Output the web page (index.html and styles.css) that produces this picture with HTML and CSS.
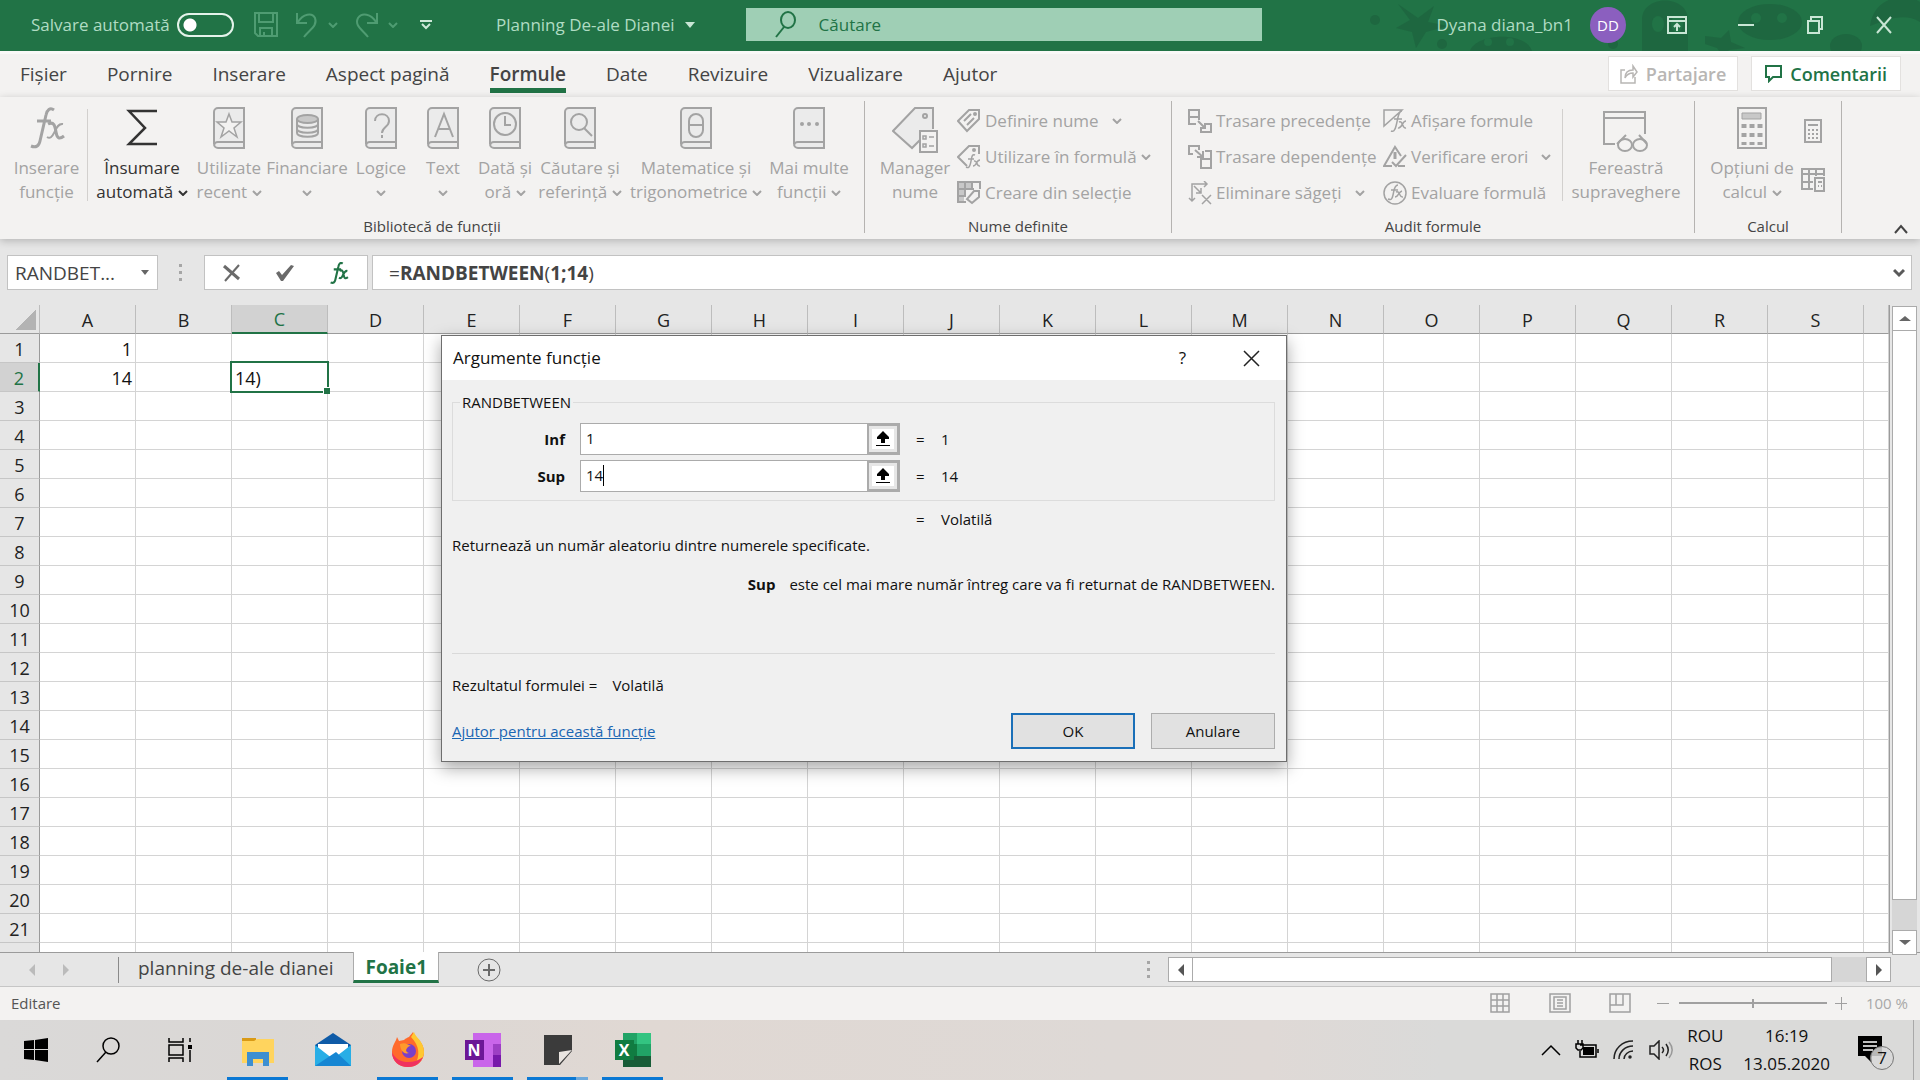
FILE: index.html
```html
<!DOCTYPE html>
<html lang="ro">
<head>
<meta charset="utf-8">
<title>Planning De-ale Dianei - Excel</title>
<link rel="stylesheet" href="styles.css">
</head>
<body>
<svg class="defs" aria-hidden="true">
  <symbol id="chev" viewBox="0 0 10 6"><path d="M1 1l4 4 4-4" fill="none" stroke="currentColor" stroke-width="2"/></symbol>
  <symbol id="book" viewBox="0 0 32 42"><path d="M31 1H5a4 4 0 0 0-4 4v32a4 4 0 0 0 4 4h26zM31 35H5a4 4 0 0 0-4 3" fill="#ebebeb" stroke="currentColor" stroke-width="2"/></symbol>
</svg>

<header class="titlebar">
  <svg class="decor" viewBox="0 0 640 51" preserveAspectRatio="xMaxYMin slice" aria-hidden="true">
    <g fill="#1c5c3b" opacity=".5">
      <path d="M118 4l20 14 16-12-6 16 20 4-22 6-10 16-4-16-16-4 14-8zM425 36l16 2 8-8 2 12 14 6-16 2-6 6-6-8-12-4z"/>
      <path d="M190 51c6-18 56-20 62 0zM362 51V20c0-26 46-26 46 0v31z"/>
      <ellipse cx="490" cy="22" rx="32" ry="18"/><ellipse cx="566" cy="46" rx="16" ry="12"/>
      <path d="M590 26c4-30 36-34 50-24v20c-16-10-34-2-50 4z"/>
      <circle cx="95" cy="20" r="5"/><circle cx="162" cy="44" r="5"/><circle cx="333" cy="44" r="5"/>
    </g>
    <g fill="#217346"><ellipse cx="378" cy="24" rx="6" ry="8"/><ellipse cx="397" cy="24" rx="6" ry="8"/><circle cx="476" cy="18" r="5"/><circle cx="502" cy="18" r="5"/><circle cx="208" cy="42" r="4"/><circle cx="230" cy="42" r="4"/></g>
  </svg>
  <label class="autosave">Salvare automată <input type="checkbox" role="switch"></label>
  <div class="quick">
    <button aria-label="Salvare"><svg width="24" height="25" viewBox="0 0 24 25" fill="none" stroke="currentColor" stroke-width="2"><path d="M1 1h22v23H4l-3-3zM5 1v9h14V1M6 24v-8h12v8M10 24v-4"/></svg></button>
    <button class="undo" aria-label="Anulare tastare"><svg width="24" height="26" viewBox="0 0 24 26" fill="none" stroke="currentColor" stroke-width="2"><path d="M2 1v10h10M3 10C8 2 17 0 20 6c3 8-6 12-11 19"/></svg><svg class="chev"><use href="#chev"/></svg></button>
    <button class="undo" aria-label="Refacere"><svg width="24" height="26" viewBox="0 0 24 26" fill="none" stroke="currentColor" stroke-width="2"><path d="M22 1v10H12M21 10C16 2 7 0 3 6c-4 8 5 12 10 19"/></svg><svg class="chev"><use href="#chev"/></svg></button>
    <button class="more" aria-label="Particularizare"><svg width="12" height="10" viewBox="0 0 12 10" fill="none" stroke="currentColor" stroke-width="2"><path d="M0 1h12M2 4l4 4 4-4"/></svg></button>
  </div>
  <button class="doc">Planning De-ale Dianei <i class="tri light"></i></button>
  <label class="search"><svg width="22" height="28" viewBox="0 0 22 28" fill="none" stroke="currentColor" stroke-width="2"><ellipse cx="13" cy="9" rx="7" ry="8"/><path d="M9 16L1 26"/></svg><input type="search" placeholder="Căutare" aria-label="Căutare"></label>
  <span class="user">Dyana diana_bn1</span>
  <span class="avatar">DD</span>
  <div class="winctl">
    <button aria-label="Opțiuni panglică"><svg width="20" height="18" viewBox="0 0 20 18" fill="none" stroke="currentColor" stroke-width="2"><path d="M1 1h18v16H1zM1 5h18M10 15V8M7 11l3-3 3 3"/></svg></button>
    <button aria-label="Minimizare"><svg width="16" height="18" viewBox="0 0 16 18" stroke="currentColor" stroke-width="2"><path d="M0 9h16"/></svg></button>
    <button aria-label="Restaurare"><svg width="16" height="18" viewBox="0 0 16 18" fill="none" stroke="currentColor" stroke-width="2"><path d="M1 5h11v12H1zM4 5V1h11v12h-3"/></svg></button>
    <button aria-label="Închidere"><svg width="16" height="18" viewBox="0 0 16 18" stroke="currentColor" stroke-width="2"><path d="M1 1l14 16M15 1L1 17"/></svg></button>
  </div>
</header>

<nav class="tabs">
  <a href="#">Fișier</a><a href="#">Pornire</a><a href="#">Inserare</a><a href="#">Aspect pagină</a><a href="#" class="on">Formule</a><a href="#">Date</a><a href="#">Revizuire</a><a href="#">Vizualizare</a><a href="#">Ajutor</a>
  <div class="share">
    <button disabled><svg width="18" height="20" viewBox="0 0 18 20" fill="none" stroke="currentColor" stroke-width="1.5"><path d="M5 6H1v13h14v-6M5 14c0-6 4-8 8-8V2l4 6-4 5V9c-4 0-6 1-8 5z"/></svg>Partajare</button>
    <button class="com"><svg width="17" height="18" viewBox="0 0 17 18" fill="none" stroke="currentColor" stroke-width="2"><path d="M1 1h15v11H8l-4 4v-4H1z"/></svg>Comentarii</button>
  </div>
</nav>

<section class="ribbon">
  <div class="group">
    <div class="tools">
      <button class="big b-ins"><svg width="38" height="42" viewBox="0 0 38 42" fill="none" stroke="currentColor"><path stroke-width="3" d="M26 3c-4-3-7 0-8 5l-6 26c-1 5-4 7-9 5M9 14h14"/><path stroke-width="3" d="M20 17c6-3 7 2 8 8s3 8 8 4"/><path stroke-width="2" d="M35 17c-5-1-7 5-9 9s-4 6-7 4"/></svg><span>Inserare<br>funcție</span></button>
      <hr>
      <button class="big b-sum dark"><svg width="32" height="42" viewBox="0 0 32 42" fill="none" stroke="currentColor" stroke-width="2.500"><path d="M31 4H3l16 17L3 37h28"/></svg><span>Însumare<br>automată <svg class="chev"><use href="#chev"/></svg></span></button>
      <button class="big b-rec"><svg width="32" height="42" viewBox="0 0 32 42"><use href="#book"/><path d="M16 7l3 8h9l-7 6 3 9-8-6-8 6 3-9-7-6h9z" fill="#f3f2f1" stroke="currentColor" stroke-width="1.5"/></svg><span>Utilizate<br>recent <svg class="chev"><use href="#chev"/></svg></span></button>
      <button class="big b-fin"><svg width="32" height="42" viewBox="0 0 32 42"><use href="#book"/><path d="M6 12v14c0 5 21 5 21 0V12M6 17c0 5 21 5 21 0M6 22c0 5 21 5 21 0" fill="none" stroke="currentColor" stroke-width="2"/><ellipse cx="16.500" cy="12" rx="10.500" ry="4" fill="#c8c8c8" stroke="currentColor" stroke-width="2"/></svg><span>Financiare<br><svg class="chev"><use href="#chev"/></svg></span></button>
      <button class="big b-log"><svg width="32" height="42" viewBox="0 0 32 42"><use href="#book"/><path d="M10 14c0-9 14-9 14 0 0 6-7 6-7 12M17 28v3" fill="none" stroke="currentColor" stroke-width="2"/></svg><span>Logice<br><svg class="chev"><use href="#chev"/></svg></span></button>
      <button class="big b-txt"><svg width="32" height="42" viewBox="0 0 32 42"><use href="#book"/><path d="M8 30l9-23 9 23M11 22h12" fill="none" stroke="currentColor" stroke-width="2"/></svg><span>Text<br><svg class="chev"><use href="#chev"/></svg></span></button>
      <button class="big b-log"><svg width="32" height="42" viewBox="0 0 32 42"><use href="#book"/><g fill="none" stroke="currentColor" stroke-width="2"><circle cx="16" cy="17" r="11"/><path d="M16 9v9h6"/></g></svg><span>Dată și<br>oră <svg class="chev"><use href="#chev"/></svg></span></button>
      <button class="big b-cau"><svg width="32" height="42" viewBox="0 0 32 42"><use href="#book"/><g fill="none" stroke="currentColor" stroke-width="2"><circle cx="15" cy="15" r="8"/><path d="M20 21l8 8"/></g></svg><span>Căutare și<br>referință <svg class="chev"><use href="#chev"/></svg></span></button>
      <button class="big b-mat"><svg width="32" height="42" viewBox="0 0 32 42"><use href="#book"/><g fill="none" stroke="currentColor" stroke-width="2"><rect x="9" y="7" width="14" height="23" rx="7"/><path d="M9 18h14"/></g></svg><span>Matematice și<br>trigonometrice <svg class="chev"><use href="#chev"/></svg></span></button>
      <button class="big b-rec"><svg width="32" height="42" viewBox="0 0 32 42"><use href="#book"/><g fill="currentColor"><circle cx="9" cy="17" r="2"/><circle cx="16" cy="17" r="2"/><circle cx="24" cy="17" r="2"/></g></svg><span>Mai multe<br>funcții <svg class="chev"><use href="#chev"/></svg></span></button>
    </div>
    <h2>Bibliotecă de funcții</h2>
  </div>

  <div class="group g-names">
    <div class="tools">
      <button class="big b-rec"><svg width="46" height="46" viewBox="0 0 46 46" fill="#ebebeb" stroke="currentColor" stroke-width="2"><path d="M41 22V1H23L1 24l19 17 8-8"/><circle cx="33" cy="9" r="2" fill="none"/><path d="M28 24h17v21H28z" fill="#f3f2f1"/><path d="M31 29h3v3h-3zM31 37h3v3h-3zM37 30h5M37 39h5" stroke-width="1.500"/></svg><span>Manager<br>nume</span></button>
      <div class="stack">
        <button><svg width="24" height="24" viewBox="0 0 24 24" fill="none" stroke="currentColor" stroke-width="2"><path d="M22 1v9L10 22 1 12 12 1zM7 12l7-7M10 16l7-7" /><circle cx="18" cy="5" r="1"/></svg>Definire nume <svg class="chev far"><use href="#chev"/></svg></button>
        <button><svg width="24" height="24" viewBox="0 0 24 24" fill="none" stroke="currentColor" stroke-width="2"><path d="M22 9V1H12L1 12l9 9"/><circle cx="17" cy="5" r="1"/><path stroke-width="1.500" d="M18 10c-4-2-3 5-5 10-1 3-2 3-4 2M11 14h6M17 16c4-1 2 6 6 5M23 15c-4 0-3 6-7 6"/></svg>Utilizare în formulă <svg class="chev"><use href="#chev"/></svg></button>
        <button><svg width="24" height="24" viewBox="0 0 24 24" fill="none" stroke="currentColor" stroke-width="2"><path d="M1 1h15v6H7v14H1z" fill="#c8c8c8" stroke="none"/><path d="M9 21H1V1h22v7M1 8h16M8 1v14M15 1v7M1 15h8M22 10v6l-7 6-5-4 7-8z"/></svg>Creare din selecție</button>
      </div>
    </div>
    <h2>Nume definite</h2>
  </div>

  <div class="group g-audit">
    <div class="tools">
      <div class="stack s-trace">
        <button><svg width="24" height="24" viewBox="0 0 24 24" fill="none" stroke="currentColor" stroke-width="2"><path d="M1 1h10v7H1zM8 15H1V8h10v3M18 15h5v8H13v-4M10 12l7 7M17 14v5h-5"/></svg>Trasare precedențe</button>
        <button><svg width="24" height="24" viewBox="0 0 24 24" fill="none" stroke="currentColor" stroke-width="2"><path d="M5 9H1V1h10v4M17 6h6v8H13v-3M13 14h10v9H13zM7 5l8 7M15 6v6h-6"/></svg>Trasare dependențe</button>
        <button><svg width="24" height="24" viewBox="0 0 24 24" fill="none" stroke="currentColor" stroke-width="1.500"><path d="M4 20V3h15M16 0l3 3-3 3M1 17l3 3 3-3M6 5l7 7M13 7v5H8M14 14l9 9M23 14l-9 9"/></svg>Eliminare săgeți <svg class="chev far"><use href="#chev"/></svg></button>
      </div>
      <div class="stack s-check">
        <button><svg width="24" height="24" viewBox="0 0 24 24" fill="none" stroke="currentColor" stroke-width="1.500"><path d="M1 17V1h18zM19 2c-4 0-4 8-6 15-1 5-3 6-5 5M11 10h8M16 13c4-2 3 7 7 6M23 12c-4 0-4 8-8 7"/></svg>Afișare formule</button>
        <button><svg width="24" height="24" viewBox="0 0 24 24" fill="none" stroke="currentColor" stroke-width="2"><path d="M18 11L12 2 1 21h8M9 17l4 4L23 10M15 21h7"/><path d="M12 7v7" stroke-width="3"/></svg>Verificare erori <svg class="chev far"><use href="#chev"/></svg></button>
        <button><svg width="24" height="24" viewBox="0 0 24 24" fill="none" stroke="currentColor" stroke-width="1.500"><circle cx="12" cy="12" r="11"/><path d="M15 4c-4 0-4 6-5 10-1 5-2 5-5 4M8 9h7M13 11c4-2 3 6 7 5M19 10c-4 1-3 6-7 6"/></svg>Evaluare formulă</button>
      </div>
      <hr>
      <button class="big b-win"><svg width="46" height="46" viewBox="0 0 46 46" fill="none" stroke="currentColor" stroke-width="2"><path d="M12 37H1V5h41v22M1 11h41"/><ellipse cx="22" cy="38" rx="7" ry="6"/><ellipse cx="37" cy="38" rx="7" ry="6"/><path d="M14 37l9-9M44 37l-8-9"/></svg><span>Fereastră<br>supraveghere</span></button>
    </div>
    <h2>Audit formule</h2>
  </div>

  <div class="group g-calc">
    <div class="tools">
      <button class="big b-opt"><svg width="30" height="42" viewBox="0 0 30 42"><path d="M1 1h28v40H1z" fill="none" stroke="currentColor" stroke-width="2"/><path d="M5 6h19v6H5z" fill="#c8c8c8" stroke="currentColor"/><path d="M7 17v21M15 17v21M23 17v21" stroke="currentColor" stroke-width="5" stroke-dasharray="4 5"/></svg><span>Opțiuni de<br>calcul <svg class="chev"><use href="#chev"/></svg></span></button>
      <div class="mini">
        <button aria-label="Calcul acum"><svg width="24" height="24" viewBox="0 0 24 24"><path d="M4 1h16v22H4zM7 6h10" fill="none" stroke="currentColor" stroke-width="2"/><path d="M8 10v11M12 10v11M16 10v11" stroke="currentColor" stroke-width="2" stroke-dasharray="2 2"/></svg></button>
        <button aria-label="Calcul foaie"><svg width="24" height="24" viewBox="0 0 24 24" fill="none" stroke="currentColor" stroke-width="2"><path d="M12 21H1V1h22v7M1 6h22M1 14h11M8 1v20M15 1v7"/><path d="M14 10h9v13h-9z"/><path d="M17 14h4M17 18h1M20 18h1"/></svg></button>
      </div>
    </div>
    <h2>Calcul</h2>
  </div>
  <button class="fold" aria-label="Restrângere panglică"><svg width="14" height="10" viewBox="0 0 14 10" fill="none" stroke="currentColor" stroke-width="2"><path d="M1 9l6-7 6 7"/></svg></button>
</section>

<section class="fbar">
  <label class="namebox"><input value="RANDBET..." aria-label="Casetă nume"><i class="tri"></i></label>
  <i class="grip"></i>
  <div class="fbtns">
    <button aria-label="Anulare"><svg width="18" height="18" viewBox="0 0 18 18" fill="none" stroke="#6a6a6a"><path stroke-width="3" d="M1 2l15 13"/><path stroke-width="2" d="M16 1L2 17"/></svg></button>
    <button aria-label="Introducere"><svg width="20" height="18" viewBox="0 0 20 18" fill="#6a6a6a"><path d="M1 9l3-2 3 4L16 1l3 1L8 17H6z"/></svg></button>
    <button aria-label="Inserare funcție"><svg width="20" height="22" viewBox="0 0 38 42" fill="none" stroke="#217346"><path stroke-width="4" d="M26 3c-4-3-7 0-8 5l-6 26c-1 5-4 7-9 5M9 14h14"/><path stroke-width="4" d="M20 17c6-3 7 2 8 8s3 8 8 4M35 17c-5-1-7 5-9 9s-4 6-7 4"/></svg></button>
  </div>
  <div class="formula"><span>=<b>RANDBETWEEN</b>(<b>1;14</b>)</span><svg width="12" height="10" viewBox="0 0 12 10" fill="none" stroke="#5a5a5a" stroke-width="3"><path d="M1 2l5 5 5-5"/></svg></div>
</section>

<main class="work">
  <div class="grid"><table id="cells"></table></div>
  <div class="vscroll"><button aria-label="Sus"><i class="tri up"></i></button><div class="vtrack"><div class="vthumb"></div></div><button aria-label="Jos"><i class="tri"></i></button></div>
</main>

<section class="sheets">
  <i class="tri left pale"></i><i class="tri right pale"></i>
  <i class="bar"></i>
  <a href="#" class="sheet">planning de-ale dianei</a>
  <a href="#" class="sheet on">Foaie1</a>
  <button class="add" aria-label="Foaie nouă"><svg width="24" height="24" viewBox="0 0 24 24" fill="none" stroke="#6a6a6a"><circle cx="12" cy="12" r="11"/><path stroke-width="2" d="M12 6v12M6 12h12"/></svg></button>
  <i class="grip"></i>
  <div class="hscroll"><button aria-label="Stânga"><i class="tri left"></i></button><div class="htrack"><div class="hthumb"></div></div><button aria-label="Dreapta"><i class="tri right"></i></button></div>
</section>

<footer class="status">
  <span>Editare</span>
  <div class="views">
    <button aria-label="Normal"><svg width="22" height="20" viewBox="0 0 22 20" fill="none" stroke="currentColor" stroke-width="1.500"><path d="M2 1h18v18H2zM8 1v18M14 1v18M2 7h18M2 13h18"/></svg></button>
    <button aria-label="Aspect pagină"><svg width="22" height="20" viewBox="0 0 22 20" fill="none" stroke="currentColor" stroke-width="1.500"><path d="M1 1h20v18H1zM5 4h12v12H5zM8 7h6M8 10h6M8 13h6"/></svg></button>
    <button aria-label="Sfârșit de pagină"><svg width="22" height="20" viewBox="0 0 22 20" fill="none" stroke="currentColor" stroke-width="1.500"><path d="M1 1h20v18H1zM7 1v11M14 1v11H1"/></svg></button>
  </div>
  <div class="zoomer"><svg width="190" height="14" viewBox="0 0 190 14" stroke="currentColor" stroke-width="2"><path stroke-width="1" d="M0 7.500h12M178 7.500h12M184.500 1v13"/><path d="M22 7h148M96 3v9"/></svg></div>
  <span class="pct">100 %</span>
</footer>

<footer class="taskbar">
  <button class="t-sys" aria-label="Start"><svg width="24" height="24" viewBox="0 0 24 24"><path d="M0 3l10-1v9H0zM11 2l13-2v11H11zM0 12h10v10L0 21zM11 12h13v12l-13-2z"/></svg></button>
  <button class="t-sys" aria-label="Căutare"><svg width="24" height="26" viewBox="0 0 24 26" fill="none" stroke="#000" stroke-width="1.500"><circle cx="15" cy="9" r="8"/><path d="M10 15L1 25"/></svg></button>
  <button class="t-sys" aria-label="Vizualizare activități"><svg width="24" height="24" viewBox="0 0 24 24" fill="none" stroke="#000" stroke-width="1.500"><path d="M1 0v4h14V0M1 7h14v10H1zM1 24v-4h14v4M22 0v4M22 12v12"/><path d="M20 7h4v4h-4z" fill="#000" stroke="none"/></svg></button>
  <button class="t-app run" aria-label="Explorer"><svg width="34" height="34" viewBox="0 0 34 34"><path d="M1 5h14v6H1z" fill="#d99a16"/><path d="M1 8h12l3-2h17v24H1z" fill="#ffd45e"/><path d="M6 33V19h22v14h-6v-7H12v7z" fill="#3d8fd1"/></svg></button>
  <button class="t-app" aria-label="E-mail"><svg width="36" height="34" viewBox="0 0 36 34"><path d="M0 12L18 0l18 12v4H0z" fill="#0f5ba7"/><path d="M3 11h30v14H3z" fill="#fff"/><path d="M0 12l18 14L36 12v21H0z" fill="#28aee6"/><path d="M0 33l21-14 15 14z" fill="#1686d3"/></svg></button>
  <button class="t-app run" aria-label="Firefox"><svg width="34" height="36" viewBox="0 0 34 36"><path d="M6 5l2 4 5-1c2-2 3-2 5-3 1-2 3-3 4-5 1 5 11 9 11 20 0 9-7 15-16 15S1 29 1 20C1 13 5 10 6 5z" fill="#ff6a2b"/><path d="M20 5c1-2 2-3 3-5 1 5 10 9 10 20 0 6-4 11-9 13 5-9 5-19-4-28z" fill="#ffc832"/><path d="M1 20c0 9 7 15 16 15 8 0 13-5 15-10-8 7-26 8-31-5z" fill="#f0325f"/><circle cx="18" cy="19" r="7" fill="#7b3fc8"/><path d="M9 12c5-2 7 0 11 2-3 0-4 2-5 4 0 2 2 3 3 3-5 2-9-3-9-9z" fill="#ff9a2b"/></svg></button>
  <button class="t-app run" aria-label="OneNote"><svg width="36" height="34" viewBox="0 0 36 34"><path d="M8 0h28v34H8z" fill="#c965ea"/><path d="M28 11h8v11h-8z" fill="#9d3fc4"/><path d="M28 22h8v12h-8z" fill="#7719aa"/><path d="M0 7h19v20H0z" fill="#6c1796"/><text x="9" y="23" class="glyph">N</text></svg></button>
  <button class="t-app run multi" aria-label="Note"><svg width="28" height="30" viewBox="0 0 28 30"><path d="M0 0h28v16L16 30H0z" fill="#3b3b3b"/><path d="M15 29V17l13-2z" fill="#e9e4e0"/></svg></button>
  <button class="t-app run" aria-label="Excel"><svg width="36" height="34" viewBox="0 0 36 34"><path d="M8 0h28v34H8z" fill="#21a366"/><path d="M22 0h14v11H22z" fill="#33c481"/><path d="M8 11h14v12H8z" fill="#107c41"/><path d="M8 23h28v11H8z" fill="#185c37"/><path d="M0 7h19v20H0z" fill="#107c41"/><text x="9" y="23" class="glyph">X</text></svg></button>
  <div class="tray">
    <svg width="20" height="12" viewBox="0 0 20 12" fill="none" stroke="#000" stroke-width="1.500"><path d="M1 11l9-9 9 9"/></svg>
    <svg width="24" height="20" viewBox="0 0 24 20"><path d="M5 5h16v12H5V11M23 9v4M3 0v4M7 0v4M1 4h7v4l-2 2H3L1 8z" fill="none" stroke="#000" stroke-width="1.500"/><path d="M8 7h11v8H8z"/></svg>
    <svg width="22" height="20" viewBox="0 0 22 20" fill="none" stroke="#222" stroke-width="1.500"><path d="M1 19C1 9 9 1 20 1M6 19C6 12 12 6 20 6M11 19c0-4 4-8 9-8"/><circle cx="17" cy="17" r="1" fill="#222"/></svg>
    <svg width="24" height="20" viewBox="0 0 24 20" fill="none" stroke="#222" stroke-width="1.500"><path d="M1 6h4l5-5v18l-5-5H1zM13 7c2 2 2 4 0 6M17 4c3 4 3 8 0 12"/><path d="M20 2c4 5 4 11 0 16" stroke="#999"/></svg>
    <span class="two">ROU<br>ROS</span>
    <span class="two clock">16:19<br>13.05.2020</span>
    <button class="note" aria-label="Notificări"><svg width="24" height="28" viewBox="0 0 24 28"><path d="M0 0h24v20H14v7l-7-7H0z"/><path d="M5 6h14M5 10h14M5 14h10" stroke="#fff" stroke-width="1.500"/></svg><span>7</span></button>
  </div>
</footer>

<div class="dialog" role="dialog" aria-label="Argumente funcție">
  <div class="dtitle"><span>Argumente funcție</span><button>?</button><button aria-label="Închidere"><svg width="17" height="17" viewBox="0 0 17 17" stroke="#222" stroke-width="1.500"><path d="M1 1l15 15M16 1L1 16"/></svg></button></div>
  <div class="dbody">
    <fieldset>
      <legend>RANDBETWEEN</legend>
      <div class="arg"><label for="inf">Inf</label><div class="ref"><input id="inf" value="1"><button aria-label="Selectare"><svg width="16" height="18" viewBox="0 0 16 18"><path d="M8 1l6 6v2h-4v4H6V9H2V7zM1 15h14v1H1z"/></svg></button></div><span>=</span><output>1</output></div>
      <div class="arg"><label for="sup">Sup</label><div class="ref caret"><input id="sup" value="14"><button aria-label="Selectare"><svg width="16" height="18" viewBox="0 0 16 18"><path d="M8 1l6 6v2h-4v4H6V9H2V7zM1 15h14v1H1z"/></svg></button></div><span>=</span><output>14</output></div>
    </fieldset>
    <div class="arg vol"><span>=</span><output>Volatilă</output></div>
    <p>Returnează un număr aleatoriu dintre numerele specificate.</p>
    <p class="desc"><b>Sup</b><span>este cel mai mare număr întreg care va fi returnat de RANDBETWEEN.</span></p>
    <p class="result"><span>Rezultatul formulei =</span><span>Volatilă</span></p>
    <div class="actions"><a href="#">Ajutor pentru această funcție</a><button class="ok">OK</button><button>Anulare</button></div>
  </div>
</div>
<script src="grid.js"></script>
</body>
</html>
```
FILE: styles.css
```css
* { box-sizing: border-box; }
html, body { height: 100%; }
body {
  margin: 0; display: flex; flex-direction: column; position: relative; overflow: hidden;
  font: 17px/24px "Open Sans", "Noto Sans", sans-serif; color: #333; background: #e6e6e6;
}
button, input { font: inherit; color: inherit; background: none; border: 0; padding: 0; margin: 0; min-width: 0; }
a { color: inherit; text-decoration: none; }
svg { flex: none; display: block; }
.defs { position: absolute; width: 0; height: 0; }
.chev { display: inline-block; width: 10px; height: 6px; vertical-align: middle; }
.tri { flex: none; width: 0; height: 0; border: 4px solid transparent; border-top: 5px solid #666; border-bottom: 0; }
.tri.up { border: 4px solid transparent; border-bottom: 5px solid #666; border-top: 0; }
.tri.left { border: 6px solid transparent; border-right: 6px solid #555; border-left: 0; }
.tri.right { border: 6px solid transparent; border-left: 6px solid #555; border-right: 0; }
.tri.left.pale { border-right-color: #bbb; }
.tri.right.pale { border-left-color: #bbb; }
.tri.light { border: 5px solid transparent; border-top: 6px solid #c9e6d5; border-bottom: 0; }
.grip { flex: none; width: 3px; height: 18px; background: repeating-linear-gradient(#a6a6a6 0 3px, transparent 3px 7px); }

/* title bar */
.titlebar { position: relative; flex: none; height: 51px; display: flex; align-items: center; background: #217346; color: #b0dcc3; padding: 0 2px 2px 31px; }
.titlebar > * { position: relative; flex: none; }
.titlebar > .decor { position: absolute; right: 0; top: 0; width: 640px; height: 51px; }
.autosave { display: flex; align-items: center; gap: 7px; width: 203px; white-space: nowrap; }
.autosave input { appearance: none; width: 57px; height: 24px; border: 2px solid #e4f3ea; border-radius: 12px; background: radial-gradient(circle at 11px 10px, #fff 6px, transparent 7px); }
.quick { display: flex; align-items: center; color: #4f9c72; margin-left: 20px; gap: 17px; }
.undo { display: flex; align-items: center; gap: 9px; }
.more { color: #cfe9da; margin-left: 5px; }
.doc { display: flex; align-items: center; gap: 10px; margin-left: 64px; white-space: nowrap; }
.titlebar .search { flex: 1 1 516px; max-width: 516px; height: 33px; margin-left: 51px; display: flex; align-items: center; gap: 22px; padding-left: 29px; background: #9fcfb5; color: #217346; }
.search input { flex: 1; outline: 0; }
.search input::placeholder { color: #217346; opacity: 1; }
.user { margin-left: auto; padding-right: 17px; }
.avatar { width: 36px; height: 36px; border-radius: 50%; background: #8b5fbf; color: #fff; font-size: 15px; line-height: 36px; text-align: center; }
.winctl { display: flex; margin-left: 16px; }
.winctl button { width: 69px; display: flex; justify-content: center; color: #c9e6d5; }

/* ribbon tabs */
.tabs { flex: none; display: flex; align-items: flex-start; gap: 40px; height: 46px; padding: 0 19px 0 20px; background: #f3f2f1; font-size: 19px; color: #444; white-space: nowrap; border-top: 3px solid #f9f9f8; }
.tabs a { margin-top: 6px; line-height: 28px; border-bottom: 5px solid transparent; }
.tabs a.on { font-weight: 600; border-color: #217346; }
.share { margin-left: auto; display: flex; gap: 13px; padding-top: 2px; font-size: 18px; }
.share button { display: flex; align-items: center; gap: 8px; height: 35px; padding: 0 11px; background: #fff; border: 1px solid #e3e1df; color: #b8b6b4; font-weight: 600; }
.share .com { color: #217346; padding: 0 13px; }

/* ribbon */
.ribbon { position: relative; z-index: 1; flex: none; display: flex; height: 142px; padding-top: 4px; background: #f3f2f1; color: #a3a3a3; box-shadow: 0 2px 8px rgba(0,0,0,.22); }
.group { flex: none; height: 132px; display: flex; flex-direction: column; justify-content: space-between; border-right: 1px solid #b5b3b1; padding: 0 17px 0 6px; }
.group h2 { margin: 0 -17px 0 -6px; font-size: 15px; line-height: 14px; font-weight: 400; color: #444; text-align: center; }
.tools { display: flex; align-items: flex-start; padding-top: 6px; }
.tools hr { flex: none; width: 1px; height: 92px; border: 0; margin: 2px 5px 0 0; background: #d2d0ce; }
.big { flex: none; height: 100px; display: flex; flex-direction: column; align-items: center; line-height: 24px; white-space: nowrap; }
.big > svg { height: 46px; }
.big > svg[height="42"] { height: 42px; margin-bottom: 4px; }
.big > span { margin-top: 3px; display: block; }
.dark { color: #333; }
.b-ins { width: 81px; } .b-sum { width: 98px; } .b-rec { width: 76px; } .b-fin { width: 80px; }
.b-log { width: 68px; } .b-txt { width: 56px; } .b-cau { width: 82px; } .b-mat { width: 150px; }
.b-win { width: 126px; } .b-opt { width: 94px; }
.g-names { width: 307px; padding: 0 0 0 12px; }
.g-names h2 { margin: 0 0 0 -12px; }
.stack { display: flex; flex-direction: column; margin-left: 4px; white-space: nowrap; }
.stack button { display: flex; align-items: center; gap: 4px; height: 36px; margin-top: -4px; margin-bottom: 4px; }
.chev.far { margin-left: 9px; }
.g-audit { width: 523px; padding: 0 4px 0 12px; }
.g-audit h2 { margin: 0 -4px 0 -12px; }
.g-audit hr { margin-right: 0; }
.s-trace { width: 191px; }
.s-check { width: 179px; }
.g-calc { width: 147px; padding: 0 0 0 10px; }
.g-calc h2 { margin: 0 0 0 -10px; }
.mini { display: flex; flex-direction: column; gap: 25px; padding: 12px 0 0 2px; }
.fold { margin: auto 12px 5px auto; color: #444; }

/* formula bar */
.fbar { flex: none; display: flex; align-items: center; height: 66px; padding: 1px 8px 0 7px; font-size: 19px; color: #444; }
.fbar > *:not(.grip) { height: 35px; background: #fff; border: 1px solid #c2c2c2; display: flex; align-items: center; }
.namebox { width: 151px; padding: 0 8px 0 7px; }
.namebox input { flex: 1; outline: 0; }
.fbar .grip { margin: 0 22px 0 21px; }
.fbtns { width: 164px; justify-content: space-around; padding: 0 1px; margin-right: 4px; }
.formula { flex: 1; justify-content: space-between; padding: 0 6px 0 16px; }
.formula b { font-weight: 700; }

/* worksheet */
.work { flex: 1; min-height: 0; display: flex; gap: 2px; padding-right: 3px; border-bottom: 1px solid #9b9b9b; }
.grid { flex: 1; min-width: 0; overflow: hidden; border-right: 1px solid #9b9b9b; }
.grid table { width: 100%; table-layout: fixed; border-collapse: separate; border-spacing: 0; background: #fff; color: #111; font-size: 18px; line-height: 26px; }
.grid th, .grid td { height: 29px; padding: 1px 3px 0; border: 0 solid #d4d4d4; border-width: 0 1px 1px 0; white-space: nowrap; }
.grid th { background: #e6e6e6; font-weight: 400; color: #222; text-align: center; padding: 1px 0 0; }
.grid thead th { border-bottom-color: #9b9b9b; border-right-color: #bdbdbd; }
.grid tbody th { border-right-color: #9b9b9b; border-bottom-color: #c6c6c6; }
.grid .rowhead { width: 40px; }
.grid .col { width: 96px; }
.grid .corner { background: linear-gradient(135deg, transparent 50%, #b3b3b3 50%) no-repeat 16px 5px / 20px 20px #e6e6e6; }
.grid thead .sel { background: #d2d2d2; color: #217346; border-bottom: 2px solid #217346; }
.grid tbody .sel { background: #d2d2d2; color: #217346; border-right: 2px solid #217346; }
.num { text-align: right; }
.grid .active { position: relative; }
.active::before { content: ""; position: absolute; inset: -2px; border: 2px solid #217346; }
.active::after { content: ""; position: absolute; right: -3px; bottom: -3px; width: 6px; height: 6px; background: #217346; border: solid #fff; border-width: 1px 0 0 1px; }
.vscroll { flex: none; width: 25px; display: flex; flex-direction: column; padding-top: 1px; margin-bottom: -3px; }
.vscroll button, .hscroll button { flex: none; display: flex; align-items: center; justify-content: center; width: 25px; height: 25px; background: #fff; border: 1px solid #ababab; }
.vscroll .tri { border-left-width: 6px; border-right-width: 6px; }
.vtrack { flex: 1; background: #d6d6d6; }
.vthumb { height: 95%; background: #fff; border: 1px solid #ababab; border-top: 0; }

/* sheet tabs */
.sheets { flex: none; height: 34px; display: flex; align-items: center; padding: 0 29px; border-bottom: 1px solid #c6c6c6; font-size: 19px; color: #444; white-space: nowrap; }
.sheets .pale.right { margin-left: 28px; }
.bar { width: 1px; height: 26px; margin-left: 49px; background: #8a8a8a; }
.sheet { padding: 0 20px 0 19px; line-height: 30px; align-self: flex-start; }
.sheet.on { margin-top: -1px; height: 31px; padding: 0 11px; background: #fff; color: #217346; font-weight: 700; border: solid #ababab; border-width: 0 1px; border-bottom: 3px solid #217346; }
.add { margin-left: 38px; }
.sheets .grip { margin-left: auto; margin-right: 18px; }
.hscroll { flex: 0 1 723px; display: flex; }
.htrack { flex: 1; background: #d6d6d6; }
.hthumb { width: 95%; height: 25px; background: #fff; border: 1px solid #ababab; border-left: 0; }

/* status bar */
.status { flex: none; height: 33px; display: flex; align-items: center; padding: 0 12px 2px 11px; background: #f3f2f1; font-size: 15px; color: #555; }
.views { margin-left: auto; display: flex; gap: 38px; color: #a0a0a0; }
.zoomer { margin-left: 26px; color: #a0a0a0; }
.pct { margin-left: 19px; color: #a8a8a8; }

/* taskbar */
.taskbar { flex: none; height: 60px; display: flex; background: linear-gradient(90deg, #dad9d8, #dad7d5 14%, #e0d8d3 34%, #ded9d6 58%, #dfd9d6 66%, #dadad9 75%); color: #111; }
.taskbar > button { display: flex; align-items: center; justify-content: center; }
.t-sys { width: 72px; }
.t-app { width: 61px; margin-right: 14px; border-block: 3px solid transparent; }
.t-sys + .t-app { margin-left: 11px; }
.run { border-bottom-color: #0a78d4; }
.run.multi { border-image: linear-gradient(90deg, #0a78d4 80%, #6ea9dc 80%) 0 0 3 0; }
.glyph { font: 700 16px "Open Sans", sans-serif; fill: #fff; text-anchor: middle; }
.tray { margin-left: auto; margin-right: 6px; padding-right: 31px; border-right: 1px solid #a9a9a9; display: flex; align-items: center; gap: 14px; }
.two { line-height: 28px; text-align: center; white-space: nowrap; }
.clock { margin-left: 6px; }
.note { position: relative; margin-left: 14px; }
.note span { position: absolute; left: 12px; top: 10px; width: 24px; height: 24px; border: 1px solid #777; border-radius: 50%; background: rgba(216,216,216,.85); font-size: 17px; line-height: 22px; }

/* function arguments window */
.dialog { position: absolute; z-index: 2; left: 441px; top: 335px; width: 846px; border: 1px solid #6e6e6e; background: #f0f0f0; color: #111; font-size: 15px; line-height: 20px; box-shadow: 0 6px 16px rgba(0,0,0,.35); }
.dtitle { height: 44px; display: flex; align-items: center; background: #fff; padding: 0 26px 0 11px; font-size: 17px; gap: 57px; }
.dtitle span { flex: 1; }
.dbody { padding: 12px 11px 12px 10px; }
.dbody p { margin: 0; }
fieldset { margin: 0; height: 109px; padding: 11px 0 0; border: 1px solid #dcdcdc; min-width: 0; }
legend { margin-left: 7px; padding: 0 2px; line-height: 20px; }
.arg { display: flex; align-items: center; height: 37px; }
fieldset .arg { height: 32px; margin-bottom: 5px; }
.arg label { width: 112px; text-align: right; font-weight: 700; }
.ref { display: flex; width: 320px; height: 32px; margin: 0 16px 0 15px; background: #fff; border: 1px solid #ababab; position: relative; }
.ref input { flex: 1; padding: 0 5px 3px; outline: 0; }
.ref button { width: 32px; display: flex; align-items: center; justify-content: center; border: 2px solid #ababab; box-shadow: inset 0 0 0 3px #e6e6e6; }
.caret::after { content: ""; position: absolute; left: 22px; top: 4px; width: 1px; height: 21px; background: #000; }
.arg > span { width: 25px; }
.arg.vol { padding-left: 464px; height: 20px; margin-top: 8px; }
.dbody .arg.vol + p { margin-top: 6px; }
.dbody .desc { display: flex; justify-content: flex-end; gap: 14px; margin-top: 19px; padding-bottom: 59px; border-bottom: 1px solid #d9d9d9; white-space: nowrap; }
.dbody .result { display: flex; gap: 15px; margin-top: 21px; }
.actions { display: flex; align-items: center; gap: 16px; margin-top: 18px; }
.actions a { margin-right: auto; color: #1a66b3; text-decoration: underline; }
.actions button { width: 124px; height: 36px; background: #e1e1e1; border: 1px solid #adadad; }
.actions .ok { border: 2px solid #1a6fb8; }
```
FILE: grid.js
```js
const letters = [..."ABCDEFGHIJKLMNOPQRS", ""];
const values = { A1: "1", A2: "14", C2: "14)" };

const head = letters.map(l =>
  `<th scope="col" class="${l ? "col" : "rest"}${l === "C" ? " sel" : ""}">${l}</th>`).join("");

const rows = [];
for (let r = 1; r <= 22; r++) {
  const cells = letters.map(l => {
    const v = values[l + r] || "";
    const cls = l + r === "C2" ? "active" : v ? "num" : "";
    return `<td${cls ? ` class="${cls}"` : ""}>${v}</td>`;
  }).join("");
  rows.push(`<tr><th scope="row"${r === 2 ? ' class="sel"' : ""}>${r}</th>${cells}</tr>`);
}

document.getElementById("cells").innerHTML =
  `<thead><tr><th class="rowhead corner"></th>${head}</tr></thead><tbody>${rows.join("")}</tbody>`;
```
